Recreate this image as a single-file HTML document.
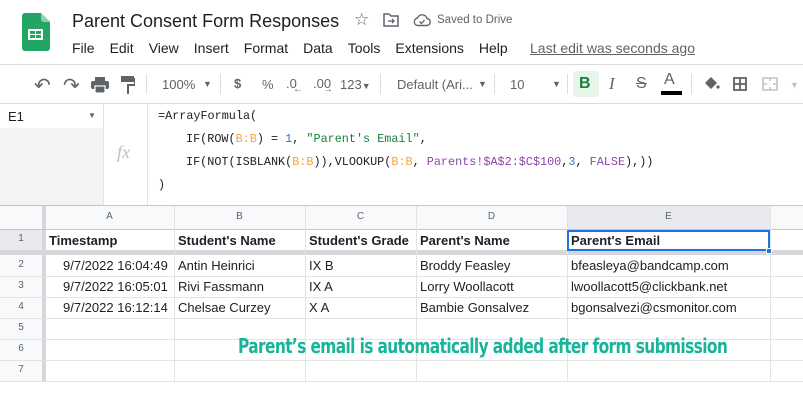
<!DOCTYPE html>
<html><head><meta charset="utf-8"><style>
*{margin:0;padding:0;box-sizing:border-box}
body{width:803px;height:414px;overflow:hidden;background:#fff;font-family:"Liberation Sans",Arial,sans-serif;position:relative;color:#202124}
.a{position:absolute;white-space:nowrap}
.menu span{margin-right:15px}
.mono{font-family:"Liberation Mono","DejaVu Sans Mono",monospace;font-size:11.8px;color:#202124}
.tb{color:#5f6368;font-size:13px}
.hl{position:absolute;height:1px;background:#e2e3e3}
.vl{position:absolute;width:1px;background:#e2e3e3}
.cell{position:absolute;font-size:13px;white-space:nowrap}
.rn{position:absolute;left:0;width:42px;text-align:center;font-size:10px;color:#5f6368}
.ch{position:absolute;top:205px;height:24px;line-height:24px;text-align:center;font-size:10px;color:#5f6368}
</style></head><body>
<svg class="a" style="left:22px;top:13px" width="28" height="38" viewBox="0 0 28 38">
<path d="M3 0h16l9 9v26a3 3 0 0 1-3 3H3a3 3 0 0 1-3-3V3a3 3 0 0 1 3-3z" fill="#23a566"/>
<path d="M19 0l9 9h-6a3 3 0 0 1-3-3z" fill="#8ed1b1"/>
<rect x="6" y="16" width="15" height="11" fill="#fff"/>
<rect x="8" y="18" width="5" height="3" fill="#23a566"/><rect x="14" y="18" width="5" height="3" fill="#23a566"/>
<rect x="8" y="22" width="5" height="3" fill="#23a566"/><rect x="14" y="22" width="5" height="3" fill="#23a566"/>
</svg>
<div class="a" style="left:72px;top:11px;font-size:18px;color:#202124">Parent Consent Form Responses</div>
<div class="a" style="left:354px;top:10px;font-size:17px;color:#5f6368">☆</div>
<svg class="a" style="left:383px;top:13px" width="16" height="14" viewBox="0 0 16 14"><path d="M1 1h5l2 2h7v10H1z" fill="none" stroke="#5f6368" stroke-width="1.5"/><path d="M5 8h6M9 6l2 2-2 2" stroke="#5f6368" stroke-width="1.3" fill="none"/></svg>
<svg class="a" style="left:413px;top:13px" width="18" height="14" viewBox="0 0 18 14"><path d="M4.5 12.5h9a3.5 3.5 0 0 0 .5-7A5 5 0 0 0 4.5 5 3.8 3.8 0 0 0 4.5 12.5z" fill="none" stroke="#5f6368" stroke-width="1.4"/><path d="M6.5 8.5l2 2 3-3.5" stroke="#5f6368" stroke-width="1.3" fill="none"/></svg>
<div class="a" style="left:437px;top:14px;font-size:11.5px;color:#5f6368">Saved to Drive</div>
<div class="a menu" style="left:72px;top:40px;font-size:14px;color:#202124"><span>File</span><span>Edit</span><span>View</span><span>Insert</span><span>Format</span><span>Data</span><span>Tools</span><span>Extensions</span><span>Help</span></div>
<div class="a" style="left:530px;top:40px;font-size:14px;color:#5f6368;text-decoration:underline">Last edit was seconds ago</div>
<div class="hl" style="left:0;top:64px;width:803px;background:#dadce0"></div>
<div class="a tb" style="left:34px;top:74px;font-size:20px;line-height:24px">↶</div>
<div class="a tb" style="left:63px;top:74px;font-size:20px;line-height:24px">↷</div>
<svg class="a" style="left:91px;top:77px" width="18" height="16" viewBox="0 0 18 16"><rect x="4" y="0" width="10" height="4" fill="#5f6368"/><rect x="0" y="4" width="18" height="8" rx="2" fill="#5f6368"/><rect x="4" y="9" width="10" height="7" fill="#5f6368" stroke="#fff" stroke-width="1.2"/></svg>
<svg class="a" style="left:121px;top:76px" width="14" height="18" viewBox="0 0 14 18"><rect x="0" y="0" width="13" height="6" fill="#5f6368"/><path d="M13 3h1v6H7v9" stroke="#5f6368" stroke-width="2" fill="none"/></svg>
<div class="vl" style="left:146px;top:74px;height:20px;background:#dadce0"></div>
<div class="a tb" style="left:162px;top:77px">100%</div><div class="a tb" style="left:203px;top:79px;font-size:9px">▼</div>
<div class="vl" style="left:220px;top:74px;height:20px;background:#dadce0"></div>
<div class="a tb" style="left:234px;top:76px;font-weight:bold">$</div>
<div class="a tb" style="left:262px;top:77px">%</div>
<div class="a tb" style="left:286px;top:76px">.0</div><div class="a tb" style="left:293px;top:84px;font-size:10px">←</div>
<div class="a tb" style="left:313px;top:76px">.00</div><div class="a tb" style="left:323px;top:84px;font-size:10px">→</div>
<div class="a tb" style="left:340px;top:77px">123<span style="font-size:9px">▼</span></div>
<div class="vl" style="left:380px;top:74px;height:20px;background:#dadce0"></div>
<div class="a tb" style="left:397px;top:77px">Default (Ari...</div><div class="a tb" style="left:478px;top:79px;font-size:9px">▼</div>
<div class="vl" style="left:494px;top:74px;height:20px;background:#dadce0"></div>
<div class="a tb" style="left:510px;top:77px">10</div><div class="a tb" style="left:552px;top:79px;font-size:9px">▼</div>
<div class="vl" style="left:567px;top:74px;height:20px;background:#dadce0"></div>
<div class="a" style="left:573px;top:71px;width:26px;height:26px;background:#e6f4ea;border-radius:3px"></div>
<div class="a" style="left:579px;top:75px;font-size:16px;font-weight:bold;color:#188038">B</div>
<div class="a tb" style="left:609px;top:74px;font-size:17px;font-style:italic;font-family:'Liberation Serif',serif">I</div>
<div class="a tb" style="left:636px;top:75px;font-size:16px;text-decoration:line-through">S</div>
<div class="a tb" style="left:664px;top:71px;font-size:16px">A</div>
<div class="a" style="left:661px;top:91px;width:21px;height:4px;background:#000"></div>
<div class="vl" style="left:691px;top:74px;height:20px;background:#dadce0"></div>
<svg class="a" style="left:702px;top:76px" width="18" height="16" viewBox="0 0 18 16"><path d="M3 7l6-6 6 6-6 6z" fill="#5f6368"/><circle cx="16" cy="11" r="1.6" fill="#5f6368"/></svg>
<svg class="a" style="left:733px;top:77px" width="14" height="14" viewBox="0 0 14 14"><path d="M1 1h12v12H1zM7 1v12M1 7h12" fill="none" stroke="#5f6368" stroke-width="1.8"/></svg>
<svg class="a" style="left:762px;top:77px" width="16" height="14" viewBox="0 0 16 14"><path d="M1 1h14v12H1zM1 7h4M11 7h4M8 1v3M8 10v3" fill="none" stroke="#c0c2c5" stroke-width="1.6"/></svg>
<div class="a" style="left:790px;top:80px;font-size:9px;color:#c0c2c5">▼</div>
<div class="hl" style="left:0;top:103px;width:803px;background:#dadce0"></div>
<div class="a" style="left:0;top:128px;width:103px;height:77px;background:#f1f3f4"></div>
<div class="a" style="left:8px;top:109px;font-size:13px">E1</div>
<div class="a tb" style="left:88px;top:111px;font-size:8px">▼</div>
<div class="vl" style="left:103px;top:104px;height:101px"></div>
<div class="a" style="left:117px;top:142px;font-size:18px;font-style:italic;color:#bdc1c6;font-family:'Liberation Serif',serif">fx</div>
<div class="vl" style="left:147px;top:104px;height:101px"></div>
<div class="a mono" style="left:158px;top:109px">=ArrayFormula(</div>
<div class="a mono" style="left:186px;top:132px">IF(ROW(<span style="color:#f4a33b">B:B</span>) = <span style="color:#3b6fc4">1</span>, <span style="color:#188038">"Parent's Email"</span>,</div>
<div class="a mono" style="left:186px;top:155px">IF(NOT(ISBLANK(<span style="color:#f4a33b">B:B</span>)),VLOOKUP(<span style="color:#f4a33b">B:B</span>, <span style="color:#8e44ad">Parents!$A$2:$C$100</span>,<span style="color:#3b6fc4">3</span>, <span style="color:#8e44ad">FALSE</span>),))</div>
<div class="a mono" style="left:158px;top:178px">)</div>
<div class="hl" style="left:0;top:205px;width:803px;background:#c4c7c5"></div>
<div class="a" style="left:0;top:206px;width:803px;height:23px;background:#f8f9fa"></div>
<div class="a" style="left:0;top:206px;width:45px;height:176px;background:#f8f9fa"></div>
<div class="a" style="left:0;top:229px;width:45px;height:21px;background:#e8eaed"></div>
<div class="a" style="left:567px;top:206px;width:203px;height:23px;background:#e8eaed"></div>
<div class="a" style="left:42px;top:206px;width:4px;height:176px;background:#d5d7da"></div>
<div class="a" style="left:0;top:250px;width:803px;height:5px;background:#d5d7da"></div>
<div class="ch" style="left:45px;width:129px">A</div>
<div class="ch" style="left:174px;width:131px">B</div>
<div class="ch" style="left:305px;width:111px">C</div>
<div class="ch" style="left:416px;width:151px">D</div>
<div class="ch" style="left:567px;width:203px">E</div>
<div class="hl" style="left:0;top:229px;width:803px;background:#c4c7c5"></div>
<div class="hl" style="left:0;top:276px;width:803px"></div>
<div class="hl" style="left:0;top:297px;width:803px"></div>
<div class="hl" style="left:0;top:318px;width:803px"></div>
<div class="hl" style="left:0;top:339px;width:803px"></div>
<div class="hl" style="left:0;top:360px;width:803px"></div>
<div class="hl" style="left:0;top:381px;width:803px"></div>
<div class="vl" style="left:174px;top:206px;height:176px"></div>
<div class="vl" style="left:305px;top:206px;height:176px"></div>
<div class="vl" style="left:416px;top:206px;height:176px"></div>
<div class="vl" style="left:567px;top:206px;height:176px"></div>
<div class="vl" style="left:770px;top:206px;height:176px"></div>
<div class="rn" style="top:233px">1</div>
<div class="rn" style="top:259px">2</div>
<div class="rn" style="top:280px">3</div>
<div class="rn" style="top:301px">4</div>
<div class="rn" style="top:322px">5</div>
<div class="rn" style="top:343px">6</div>
<div class="rn" style="top:364px">7</div>
<div class="cell" style="left:49px;top:233px;font-weight:bold">Timestamp</div>
<div class="cell" style="left:178px;top:233px;font-weight:bold">Student's Name</div>
<div class="cell" style="left:309px;top:233px;font-weight:bold">Student's Grade</div>
<div class="cell" style="left:420px;top:233px;font-weight:bold">Parent's Name</div>
<div class="cell" style="left:571px;top:233px;font-weight:bold">Parent's Email</div>
<div class="a" style="left:567px;top:230px;width:203px;height:21px;border:2px solid #1a73e8"></div>
<div class="a" style="left:766px;top:248px;width:6px;height:6px;background:#1a73e8;border:1px solid #fff"></div>
<div class="cell" style="left:63px;top:258px">9/7/2022 16:04:49</div>
<div class="cell" style="left:178px;top:258px">Antin Heinrici</div>
<div class="cell" style="left:309px;top:258px">IX B</div>
<div class="cell" style="left:420px;top:258px">Broddy Feasley</div>
<div class="cell" style="left:571px;top:258px">bfeasleya@bandcamp.com</div>
<div class="cell" style="left:63px;top:279px">9/7/2022 16:05:01</div>
<div class="cell" style="left:178px;top:279px">Rivi Fassmann</div>
<div class="cell" style="left:309px;top:279px">IX A</div>
<div class="cell" style="left:420px;top:279px">Lorry Woollacott</div>
<div class="cell" style="left:571px;top:279px">lwoollacott5@clickbank.net</div>
<div class="cell" style="left:63px;top:300px">9/7/2022 16:12:14</div>
<div class="cell" style="left:178px;top:300px">Chelsae Curzey</div>
<div class="cell" style="left:309px;top:300px">X A</div>
<div class="cell" style="left:420px;top:300px">Bambie Gonsalvez</div>
<div class="cell" style="left:571px;top:300px">bgonsalvezi@csmonitor.com</div>
<div class="a" style="left:238px;top:334px;font-size:20px;font-weight:bold;color:#1bb39a;font-family:'Comic Sans MS','DejaVu Sans',sans-serif;letter-spacing:-0.8px;transform:scaleX(0.77);transform-origin:left">Parent’s email is automatically added after form submission</div>
</body></html>
